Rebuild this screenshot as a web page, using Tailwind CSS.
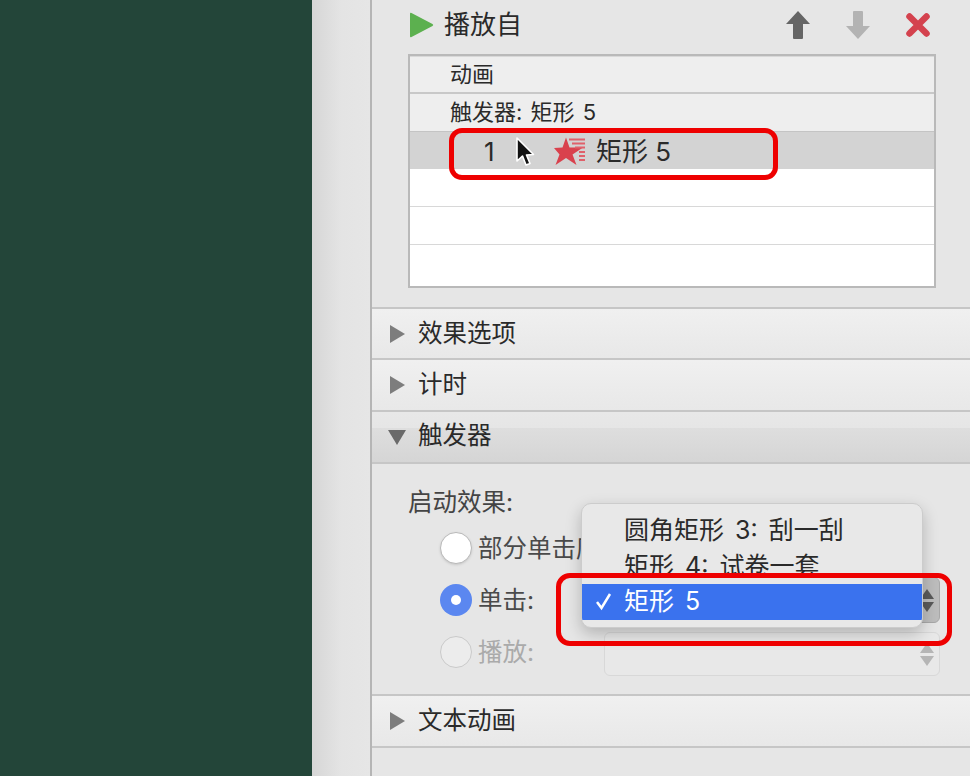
<!DOCTYPE html>
<html lang="zh">
<head>
    <meta charset="UTF-8">
    <script src="https://cdn.jsdelivr.net/npm/@tailwindcss/browser@4"></script>
    <title>动画窗格</title>
</head>
<body class="w-[970px] h-[776px] overflow-hidden bg-[#e6e6e6] font-['Inter','Noto_Sans_CJK_SC',sans-serif] text-[#2a2a2a]">
<div class="flex h-[776px]">
    <div class="w-[312px] bg-[#234539]"></div>
    <div class="w-[58px] bg-gradient-to-r from-[#d6d6d6] via-[#e4e4e4] to-[#e6e6e6]"></div>

    <div class="relative w-[600px] h-[776px] border-l-2 border-[#b5b5b5] bg-[#e6e6e6]">

        <!-- Play row -->
        <div class="h-[54px] flex items-center pl-[38px] pr-[40px]">
            <svg width="24" height="28" viewBox="0 0 24 28" class="mb-[5px]"><path d="M1.5 2 L22.5 13 Q24 14 22.5 15 L1.5 26 Q0 27 0 25 V3 Q0 1 1.5 2Z" fill="#5cb04f"/></svg>
            <span class="ml-[10px] text-[26px] leading-[30px] mb-[4px]">播放自</span>
            <svg width="24" height="30" viewBox="0 0 24 30" class="ml-auto mb-[5px]"><path d="M12 1 L24 14 H17 V28 Q17 29 16 29 H8 Q7 29 7 28 V14 H0Z" fill="#656565"/></svg>
            <svg width="24" height="30" viewBox="0 0 24 30" class="ml-[36px] mb-[5px]"><path d="M12 29 L24 16 H17 V2 Q17 1 16 1 H8 Q7 1 7 2 V16 H0Z" fill="#b3b3b3"/></svg>
            <svg width="24" height="24" viewBox="0 0 24 24" class="ml-[36px] mb-[5px]"><path d="M3.5 3.5 L20.5 20.5 M20.5 3.5 L3.5 20.5" stroke="#d4424e" stroke-width="6.5" stroke-linecap="round"/></svg>
        </div>

        <!-- Animation list -->
        <div class="ml-[36px] w-[528px] h-[234px] border-2 border-[#b9b9b9] bg-white">
            <div class="h-[38px] pl-[40px] flex items-center bg-[#eeeeee] border-t border-[#d8d8d8] border-b-2 border-b-[#c8c8c8] text-[22px]">动画</div>
            <div class="h-[37px] pl-[40px] flex items-center bg-[#eeeeee] text-[22px] [word-spacing:2px]">触发器: 矩形 5</div>
            <div class="h-[38px] flex items-center bg-[#d3d3d3] border-t border-[#c4c4c4] text-[26px]">
                <span class="ml-[74px] w-[70px] leading-[30px] mt-[3px]">1</span>
                <svg width="32" height="28" viewBox="0 0 32 28"><path d="M12 0.5 L15.5 10.5 L29 10.5 L18.5 17.5 L22.5 28 L12 21 L1.5 28 L5.5 17.5 L0 11 L8.5 10.5Z" fill="#d9414d"/><path d="M15 2.5 H31 M18 6.5 H31 M21 10.5 H31 M25 15 H31 M25 19 H31 M25 23 H31" stroke="#e0606a" stroke-width="1.8"/></svg>
                <span class="ml-[10px] leading-[30px] mt-[3px]">矩形 5</span>
            </div>
            <div class="h-[38px] border-b border-[#d8d8d8]"></div>
            <div class="h-[38px] border-b border-[#d8d8d8]"></div>
        </div>

        <!-- Accordion rows -->
        <div class="mt-[19px] h-[53px] flex items-center border-t-2 border-b-2 border-t-[#c6c6c6] border-b-[#c6c6c6] bg-gradient-to-b from-[#f0f0f0] to-[#e8e8e8]">
            <svg width="15" height="18" viewBox="0 0 15 18" class="ml-[18px]"><path d="M0 0 L15 9 L0 18Z" fill="#7d7d7d"/></svg>
            <span class="ml-[13px] text-[24.5px] leading-[30px] mb-[2px]">效果选项</span>
        </div>
        <div class="h-[52px] flex items-center border-b-2 border-[#c6c6c6] bg-gradient-to-b from-[#f0f0f0] to-[#e8e8e8]">
            <svg width="15" height="18" viewBox="0 0 15 18" class="ml-[18px]"><path d="M0 0 L15 9 L0 18Z" fill="#7d7d7d"/></svg>
            <span class="ml-[13px] text-[24.5px] leading-[30px] mb-[2px]">计时</span>
        </div>
        <div class="h-[52px] flex items-center border-b-2 border-[#c6c6c6] bg-[linear-gradient(#e8e8e8_0%,#e6e6e6_32%,#dedede_32%,#d5d5d5_100%)]">
            <svg width="18" height="15" viewBox="0 0 18 15" class="ml-[16px]"><path d="M0 0 H18 L9 15Z" fill="#6a6a6a"/></svg>
            <span class="ml-[12px] text-[24.5px] leading-[30px] mb-[4px]">触发器</span>
        </div>

        <!-- Trigger settings -->
        <div class="h-[232px] pl-[36px] pt-[22px] border-b-2 border-[#c6c6c6] bg-[#e6e6e6]">
            <div class="text-[24.5px] leading-[32px] text-[#444]">启动效果:</div>
            <div class="mt-[14px] ml-[32px] flex flex-col gap-[20px]">
                <div class="flex items-center h-[32px]">
                    <span class="w-[32px] h-[32px] rounded-full bg-white border border-[#b9b9b9] shadow-sm"></span>
                    <span class="ml-[6px] text-[24.5px] leading-[32px] text-[#4a4a4a]">部分单击序列:</span>
                </div>
                <div class="flex items-center h-[32px]">
                    <span class="w-[32px] h-[32px] rounded-full bg-[#5b87f0] flex items-center justify-center"><span class="w-[10px] h-[10px] rounded-full bg-white"></span></span>
                    <span class="ml-[6px] text-[24.5px] leading-[32px] text-[#4a4a4a] w-[126px]">单击:</span>
                    <div class="w-[336px] h-[46px] rounded-[6px] bg-[#bdbdbd] border border-[#a8a8a8] flex flex-col items-end justify-center gap-[3px] pr-[5px]">
                        <svg width="14" height="10" viewBox="0 0 14 10"><path d="M7 0 L14 10 H0Z" fill="#5a5a5a"/></svg>
                        <svg width="14" height="10" viewBox="0 0 14 10"><path d="M7 10 L14 0 H0Z" fill="#5a5a5a"/></svg>
                    </div>
                </div>
                <div class="flex items-center h-[32px]">
                    <span class="w-[32px] h-[32px] rounded-full bg-[#ececec] border border-[#cacaca]"></span>
                    <span class="ml-[6px] text-[24.5px] leading-[32px] text-[#aaaaaa] w-[126px]">播放:</span>
                    <div class="w-[336px] h-[44px] rounded-[6px] bg-[#e8e8e8] border border-[#d8d8d8] flex flex-col items-end justify-center gap-[3px] pr-[5px] mt-[4px]">
                        <svg width="14" height="10" viewBox="0 0 14 10"><path d="M7 0 L14 10 H0Z" fill="#b5b5b5"/></svg>
                        <svg width="14" height="10" viewBox="0 0 14 10"><path d="M7 10 L14 0 H0Z" fill="#b5b5b5"/></svg>
                    </div>
                </div>
            </div>
        </div>

        <div class="h-[52px] flex items-center border-b-2 border-[#c6c6c6] bg-gradient-to-b from-[#f0f0f0] to-[#e8e8e8]">
            <svg width="15" height="18" viewBox="0 0 15 18" class="ml-[18px]"><path d="M0 0 L15 9 L0 18Z" fill="#7d7d7d"/></svg>
            <span class="ml-[13px] text-[24.5px] leading-[30px] mb-[2px]">文本动画</span>
        </div>

        <!-- Cursor over the selected row -->
        <svg width="20" height="30" viewBox="0 0 20 30" class="absolute left-[143px] top-[137px]"><path d="M2 1 V24 L7.5 19 L11 28 L15 26.5 L11.5 18 L18.5 17.5Z" fill="#111" stroke="#fff" stroke-width="1.6" stroke-linejoin="round"/></svg>

        <!-- Dropdown menu -->
        <div class="absolute left-[209px] top-[503px] w-[342px] h-[125px] rounded-[10px] bg-[#e8e8e8] border border-[#cccccc] shadow-[0_6px_16px_rgba(0,0,0,0.22)] overflow-hidden text-[25px] leading-[35px] [word-spacing:4px]">
            <div class="pl-[42px] pt-[9px] h-[43px]">圆角矩形 3: 刮一刮</div>
            <div class="pl-[42px] pt-[2px] h-[37px]">矩形 4: 试卷一套</div>
            <div class="flex items-center h-[36px] bg-[#3a72ee] text-white">
                <svg width="20" height="20" viewBox="0 0 20 20" class="ml-[12px] mb-[2px]"><path d="M3 11 L7.5 17 L16 3" fill="none" stroke="#fff" stroke-width="2.5"/></svg>
                <span class="ml-[10px] mb-[1px]">矩形 5</span>
            </div>
        </div>

        <!-- Red annotations -->
        <div class="absolute left-[77px] top-[128px] w-[329px] h-[52px] rounded-[13px] border-[5px] border-[#ee0000]"></div>
        <div class="absolute left-[184px] top-[573px] w-[396px] h-[73px] rounded-[14px] border-[5px] border-[#ee0000]"></div>
    </div>
</div>
</body>
</html>
